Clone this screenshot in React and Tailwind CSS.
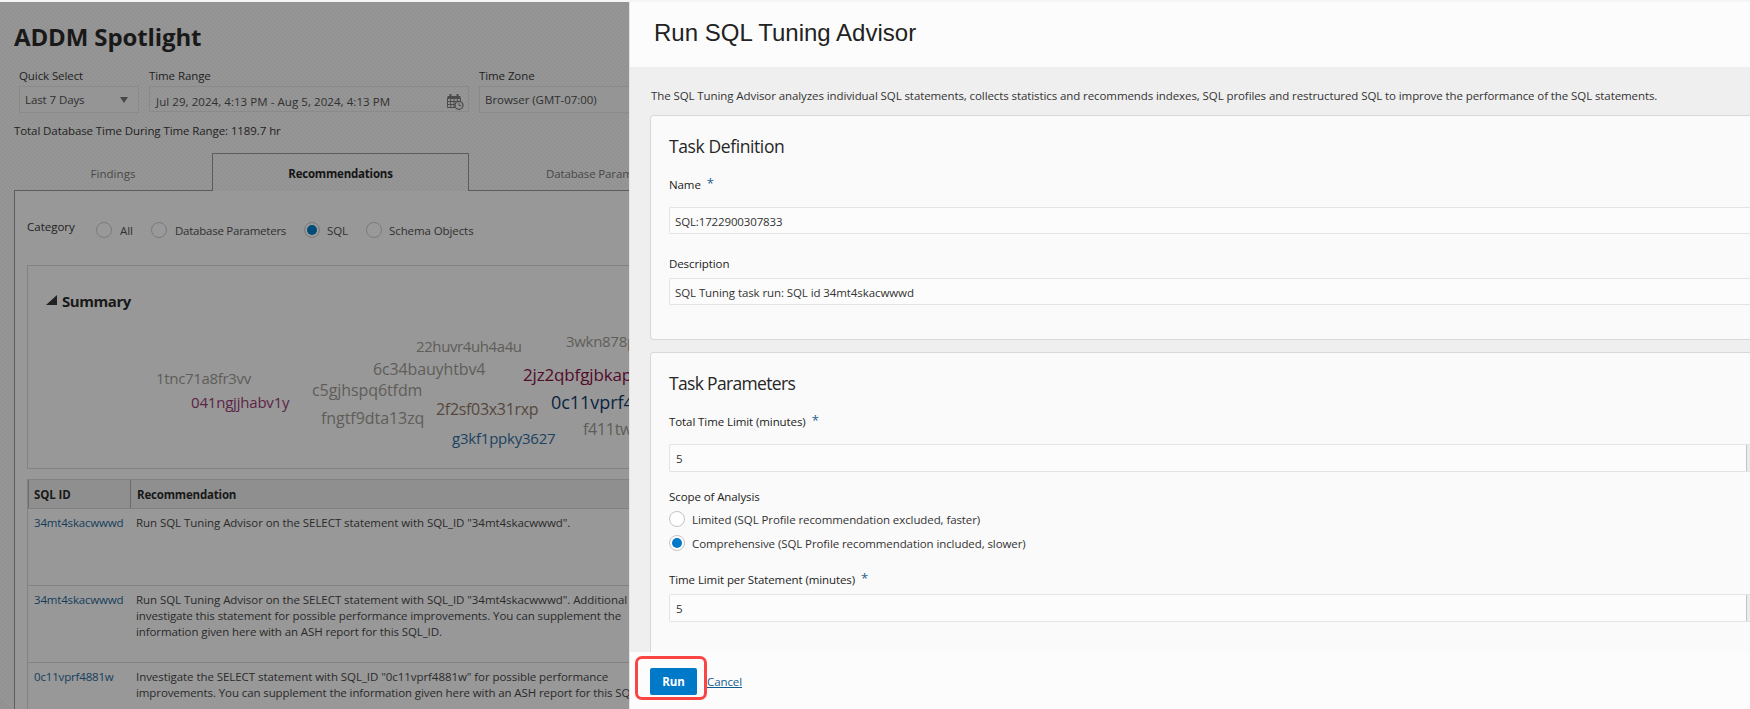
import React from 'react';

const rows = [
  { id: '34mt4skacwwwd', lines: ['Run SQL Tuning Advisor on the SELECT statement with SQL_ID "34mt4skacwwwd".'] },
  {
    id: '34mt4skacwwwd',
    lines: [
      'Run SQL Tuning Advisor on the SELECT statement with SQL_ID "34mt4skacwwwd". Additional',
      'investigate this statement for possible performance improvements. You can supplement the',
      'information given here with an ASH report for this SQL_ID.',
    ],
  },
  {
    id: '0c11vprf4881w',
    lines: [
      'Investigate the SELECT statement with SQL_ID "0c11vprf4881w" for possible performance',
      'improvements. You can supplement the information given here with an ASH report for this SQL_ID.',
    ],
  },
];

const cloud = [
  { t: '1tnc71a8fr3vv', c: 'left-[128px] top-[101px] text-[15px] tracking-[-0.32px] text-[#5f5d58]' },
  { t: '041ngjjhabv1y', c: 'left-[163px] top-[125px] text-[15px] tracking-[-0.2px] text-[#5c2446]' },
  { t: 'c5gjhspq6tfdm', c: 'left-[284px] top-[113px] text-[16px] tracking-[-0.08px] text-[#5f5d58]' },
  { t: 'fngtf9dta13zq', c: 'left-[293px] top-[141px] text-[16px] tracking-[-0.06px] text-[#5f5d58]' },
  { t: '22huvr4uh4a4u', c: 'left-[388px] top-[69px] text-[15px] tracking-[-0.4px] text-[#5f5d58]' },
  { t: '6c34bauyhtbv4', c: 'left-[345px] top-[92px] text-[16px] tracking-[-0.14px] text-[#5f5d58]' },
  { t: '2f2sf03x31rxp', c: 'left-[408px] top-[132px] text-[16px] tracking-[-0.32px] text-[#56473c]' },
  { t: 'g3kf1ppky3627', c: 'left-[424px] top-[161px] text-[15px] tracking-[-0.22px] text-[#1b4260]' },
  { t: '3wkn878pr5d2c', c: 'left-[538px] top-[64px] text-[15px] tracking-[-0.3px] text-[#5f5d58]' },
  { t: '2jz2qbfgjbkap', c: 'left-[495px] top-[98px] leading-[22px] text-[17px] tracking-[-0.15px] text-[#520a2a]' },
  { t: '0c11vprf4881w', c: 'left-[523px] top-[125px] text-[18px] tracking-[-0.05px] text-[#0b2440]' },
  { t: 'f411twq8s0bxz', c: 'left-[555px] top-[152px] text-[16px] tracking-[-0.3px] text-[#5f5d58]' },
];

function CalendarClock() {
  return (
    <svg className="h-4 w-[17px]" viewBox="0 0 17 16" fill="none">
      <path d="M0.5 2H13.5V5H0.5z" fill="#4c4c4c" />
      <path d="M3.5 0v3M10.5 0v3" stroke="#4c4c4c" strokeWidth="2" />
      <path d="M0.5 4v9.5H8M0.5 7.5H13M0.5 10.5H8.5M3.7 5v8.5M7 5v8.5M10.3 5v3M13.5 4v3.5" stroke="#4c4c4c" strokeWidth="1" />
      <circle cx="12" cy="11.3" r="4" fill="#939393" stroke="#4c4c4c" strokeWidth="1.3" />
      <path d="M12 8.8v2.8h2.2" stroke="#4c4c4c" strokeWidth="1" />
    </svg>
  );
}

function Radio({ checked, dim }) {
  return (
    <span
      className={
        'flex h-4 w-4 shrink-0 items-center justify-center rounded-full border ' +
        (dim ? 'border-[#7b7b7b] bg-[#999999]' : 'border-[#c4c4c4] bg-white')
      }
    >
      {checked && <span className={'h-2.5 w-2.5 rounded-full ' + (dim ? 'bg-[#004d79]' : 'bg-[#0079c8]')} />}
    </span>
  );
}

function Spotlight() {
  return (
    <div className="flex w-[629px] shrink-0 flex-col overflow-hidden bg-[repeating-linear-gradient(45deg,#979797_0_1.41px,#919191_1.41px_2.83px)] whitespace-nowrap text-[#222]">
      <h1 className="mt-[19px] pl-[14px] text-[24px] leading-8 font-bold tracking-[-0.12px] text-[#191919]">ADDM Spotlight</h1>

      <div className="mt-[14px] flex pl-[19px]">
        <div className="w-[120px] shrink-0">
          <div className="h-[19px] pt-px leading-4">Quick Select</div>
          <div className="flex h-[27px] items-center justify-between border border-[#8a8a8a] bg-[#959595] pt-px pr-2.5 pl-[5px] text-[#303030]">
            <span>Last 7 Days</span>
            <span className="h-0 w-0 border-x-[4.5px] border-t-[6px] border-x-transparent border-t-[#484848]" />
          </div>
        </div>
        <div className="ml-[10px] w-[320px] shrink-0">
          <div className="h-[19px] pt-px leading-4">Time Range</div>
          <div className="flex h-[26px] items-center justify-between border border-[#8a8a8a] pr-[4px] pl-[6px] text-[#303030]">
            <span className="pt-[5px] tracking-[0.06px]">Jul 29, 2024, 4:13 PM - Aug 5, 2024, 4:13 PM</span>
            <span className="pt-[5px]"><CalendarClock /></span>
          </div>
        </div>
        <div className="ml-[10px] w-[200px] shrink-0">
          <div className="h-[19px] pt-px leading-4">Time Zone</div>
          <div className="flex h-[27px] items-center border border-[#8a8a8a] bg-[#959595] pt-px pl-[5px] tracking-[-0.04px] text-[#303030]">
            Browser (GMT-07:00)
          </div>
        </div>
      </div>

      <p className="mt-[10px] pl-[14px] leading-4">Total Database Time During Time Range: 1189.7 hr</p>

      <div className="mt-[14px] ml-[14px] flex h-[38px] w-[700px] shrink-0 leading-4">
        <div className="w-[198px] border-b border-[#5c5c5c] pt-[13px] text-center tracking-[0.05px] text-[#484848]">Findings</div>
        <div className="w-[257px] border-x border-t border-[#5c5c5c] pt-[12px] text-center font-bold tracking-[-0.2px] text-[#151515]">Recommendations</div>
        <div className="flex-1 border-b border-[#5c5c5c] pt-[13px] pl-[77px] tracking-[-0.14px] text-[#484848]">Database Parameters</div>
      </div>

      <div className="ml-[14px] flex w-[700px] flex-1 flex-col border-l border-[#5c5c5c] bg-[#989898] pl-3">
        <div className="mt-[28px] flex h-[24px] shrink-0 items-start leading-4">
          <span className="w-[69px] tracking-normal text-[#1e1e1e]">Category</span>
          <span className="mt-[3px] flex text-[#303030]">
            <Radio dim />
            <span className="ml-2 w-[31px] pt-px">All</span>
            <Radio dim />
            <span className="ml-2 w-[129px] pt-px tracking-[-0.25px]">Database Parameters</span>
            <Radio dim checked />
            <span className="ml-[7px] w-[39px] pt-px">SQL</span>
            <Radio dim />
            <span className="ml-[7px] pt-px">Schema Objects</span>
          </span>
        </div>

        <div className="relative mt-[22px] h-[204px] shrink-0 border border-[#838383]">
          <div className="flex items-center pt-[25px] pl-[18px]">
            <svg className="mb-0.5 h-[10px] w-[11px]" viewBox="0 0 11 10"><path d="M0 10H11V0Z" fill="#222" /></svg>
            <span className="ml-[5px] text-[15px] leading-5 font-bold tracking-[-0.45px] text-[#191919]">Summary</span>
          </div>
          {cloud.map((w) => (
            <span key={w.t} className={'absolute leading-[22px] ' + w.c}>{w.t}</span>
          ))}
        </div>

        <div className="mt-[10px] shrink-0 border-t border-l border-[#838383] leading-4">
          <div className="flex h-[29px] border-b border-[#808080] bg-[#8f8f8f] font-bold text-[#191919]">
            <span className="w-[102px] border-l border-[#6c6c6c] pt-[7px] pl-[5px]">SQL ID</span>
            <span className="flex-1 border-l border-[#6c6c6c] pt-[7px] pl-[6px] tracking-[-0.18px]">Recommendation</span>
          </div>
          {rows.map((r, i) => (
            <div key={i} className="flex h-[77px] border-b border-[#838383] pt-[6px] pl-[6px]">
              <span className="w-[102px] shrink-0 tracking-[-0.17px] text-[#143d5c]">{r.id}</span>
              <span className="text-[#2a2a2a]">
                {r.lines.map((l, n) => (
                  <span key={l} className={n === 0 ? 'block tracking-[-0.06px]' : 'block tracking-[-0.1px]'}>{l}</span>
                ))}
              </span>
            </div>
          ))}
        </div>
      </div>
    </div>
  );
}

function Label({ children, required }) {
  return (
    <div className="flex h-4 pt-px leading-4 text-[#222]">
      {children}
      {required && <span className="-mt-[2px] ml-[6px] text-[13px] text-[#1a5f96]">*</span>}
    </div>
  );
}

function Panel() {
  return (
    <div className="flex min-w-0 flex-1 flex-col overflow-hidden border-l border-[#e2e2e2] bg-[#fcfcfc] whitespace-nowrap text-[#333]">
      <div className="h-[65px] shrink-0 pt-[15px] pl-[24px]">
        <h2 className="font-['Liberation_Sans',sans-serif] text-[24px] leading-8 tracking-[0.01px] text-[#222]">Run SQL Tuning Advisor</h2>
      </div>
      <div className="flex h-[585px] shrink-0 flex-col overflow-hidden bg-[#efefef] pl-5">
        <p className="mt-[21px] pl-px leading-4">
          The SQL Tuning Advisor analyzes individual SQL statements, collects statistics and recommends indexes, SQL profiles and restructured SQL to improve the performance of the SQL statements.
        </p>

        <div className="mt-[11px] h-[225px] shrink-0 rounded-l-sm border border-r-0 border-[#d8d8db] bg-[#fafafa] pl-[18px]">
          <h3 className="mt-[18px] text-[17.5px] leading-6 tracking-[-0.4px] text-[#262626]">Task Definition</h3>
          <div className="mt-[18px]"><Label required>Name</Label></div>
          <div className="mt-[15px] flex h-[27px] items-center rounded-l-xs border border-r-0 border-[#e4e4e4] bg-[#fcfcfc] pt-0.5 pl-[5px] tracking-[-0.14px]">
            SQL:1722900307833
          </div>
          <div className="mt-[21px]"><Label>Description</Label></div>
          <div className="mt-[7px] flex h-[27px] items-center rounded-l-xs border border-r-0 border-[#e4e4e4] bg-[#fcfcfc] pt-0.5 pl-[5px]">
            SQL Tuning task run: SQL id 34mt4skacwwwd
          </div>
        </div>

        <div className="mt-3 h-[400px] shrink-0 rounded-l-sm border border-r-0 border-[#d8d8db] bg-[#fafafa] pl-[18px]">
          <h3 className="mt-[18px] text-[17.5px] leading-6 tracking-[-0.67px] text-[#262626]">Task Parameters</h3>
          <div className="mt-[18px]"><Label required>Total Time Limit (minutes)</Label></div>
          <div className="mt-[15px] flex h-[28px] items-stretch rounded-l-xs border border-r-0 border-[#e4e4e4] bg-[#fcfcfc]">
            <span className="flex flex-1 items-center pt-px pl-[6px]">5</span>
            <span className="w-[4px] border-l border-[#c4c4c4] bg-[#ebebeb]" />
          </div>
          <div className="mt-[16px]"><Label>Scope of Analysis</Label></div>
          <div className="mt-[7px] flex h-4 leading-4"><Radio /><span className="ml-[7px] pt-px">Limited (SQL Profile recommendation excluded, faster)</span></div>
          <div className="mt-2 flex h-4 leading-4"><Radio checked /><span className="ml-[7px] pt-px">Comprehensive (SQL Profile recommendation included, slower)</span></div>
          <div className="mt-[20px]"><Label required>Time Limit per Statement (minutes)</Label></div>
          <div className="mt-[7px] flex h-[28px] items-stretch rounded-l-xs border border-r-0 border-[#e4e4e4] bg-[#fcfcfc]">
            <span className="flex flex-1 items-center pt-px pl-[6px]">5</span>
            <span className="w-[4px] border-l border-[#c4c4c4] bg-[#ebebeb]" />
          </div>
        </div>
      </div>
      <div className="flex flex-1 items-start pt-[4px] pl-[5px]">
        <div className="h-[44px] w-[72px] shrink-0 rounded-[7px] border-3 border-[#fb4444] pt-[9px] pl-3">
          <button className="h-[27px] w-[47px] rounded-[2px] bg-[#0079c8] text-center font-bold tracking-normal text-white">Run</button>
        </div>
        <a className="mt-[18px] text-[#145c8e] underline underline-offset-1">Cancel</a>
      </div>
    </div>
  );
}

export default function App() {
  return (
    <div className="flex h-[709px] w-[1750px] flex-col overflow-hidden bg-[#f3f5f7] font-['Open_Sans','Noto_Sans',sans-serif] text-[11.5px] leading-4 tracking-[-0.09px]">
      <div className="h-[2px] shrink-0" />
      <div className="flex min-h-0 flex-1">
        <Spotlight />
        <Panel />
      </div>
    </div>
  );
}
